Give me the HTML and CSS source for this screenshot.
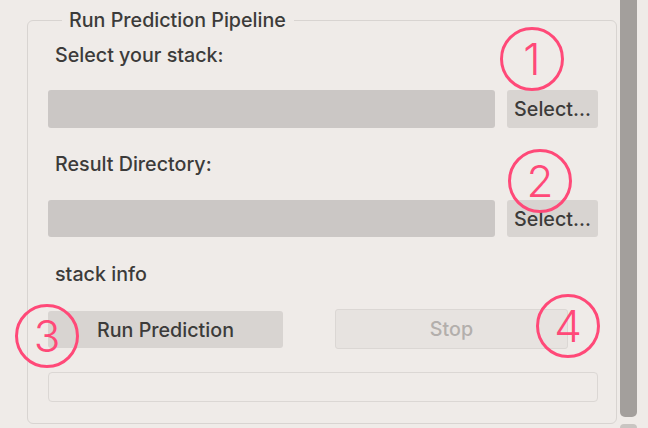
FILE: index.html
```html
<!DOCTYPE html>
<html>
<head>
<meta charset="utf-8">
<link rel="stylesheet" href="styles.css">
</head>
<body>
<div class="window">
  <div class="pane">
    <fieldset class="group">
      <legend class="group-title">Run Prediction Pipeline</legend>
      <div class="label label-first">Select your stack:</div>
      <div class="row row-first">
        <div class="field"></div>
        <button class="btn select">Select...</button>
      </div>
      <div class="label label-second">Result Directory:</div>
      <div class="row row-second">
        <div class="field"></div>
        <button class="btn select">Select...</button>
      </div>
      <div class="label label-info">stack info</div>
      <div class="actions">
        <button class="btn run">Run Prediction</button>
        <button class="btn stop" disabled>Stop</button>
      </div>
      <div class="progress"></div>
    </fieldset>
    <span class="badge badge-1">1</span>
    <span class="badge badge-2">2</span>
    <span class="badge badge-3">3</span>
    <span class="badge badge-4">4</span>
  </div>
  <div class="scrollbar">
    <div class="thumb"></div>
    <div class="thumb-next"></div>
  </div>
</div>
</body>
</html>
```

FILE: styles.css
```css
html, body {
  margin: 0;
  padding: 0;
  background: #efebe8;
  width: 648px;
  height: 428px;
  overflow: hidden;
  font-family: Inter, "Liberation Sans", sans-serif;
}

.window {
  display: flex;
  height: 428px;
}

.pane {
  position: relative;
  width: 620px;
  padding: 8px 3px 0 27px;
  box-sizing: border-box;
}

.group {
  margin: 0;
  padding: 0 18px 0 20px;
  border: 1px solid #d8d4d1;
  border-radius: 6px;
  height: 416px;
  box-sizing: border-box;
}

.group-title {
  margin-left: 14px;
  padding: 0 8px 0 7px;
  font-size: 19.7px;
  font-weight: 500;
  color: #3c3b3a;
  line-height: 24px;
}

.label {
  font-size: 19.7px;
  font-weight: 500;
  color: #3c3b3a;
  line-height: 24px;
  padding-left: 7px;
}

.label-first { margin-top: 11px; }
.label-second { margin-top: 24px; }
.label-info { margin-top: 25px; }

.row {
  display: flex;
  gap: 12px;
  margin-top: 23px;
}

.row-first { height: 38px; }
.row-second { height: 37px; margin-top: 24px; }

.field {
  flex: 1;
  background: #cbc7c5;
  border-radius: 3px;
}

.btn {
  font-family: inherit;
  font-size: 19.7px;
  font-weight: 500;
  color: #3c3b3a;
  border: none;
  border-radius: 3px;
  background: #d8d4d1;
  padding: 0;
}

.select {
  width: 91px;
}

.actions {
  display: flex;
  justify-content: space-between;
  align-items: center;
  margin-top: 23px;
  height: 40px;
}

.run {
  width: 235px;
  height: 37px;
  padding-top: 2px;
}

.stop {
  width: 233px;
  height: 40px;
  margin-right: 30px;
  background: #e7e3e0;
  border: 1px solid #dbd7d4;
  color: #b3afac;
}

.progress {
  margin-top: 23px;
  height: 30px;
  border: 1px solid #dbd7d4;
  border-radius: 4px;
  box-sizing: border-box;
}

.badge {
  position: absolute;
  width: 64px;
  height: 64px;
  box-sizing: border-box;
  border: 3px solid #ff4978;
  border-radius: 50%;
  color: #ff4978;
  font-family: Inter, "Liberation Sans", sans-serif;
  font-weight: 300;
  font-size: 44px;
  line-height: 58px;
  text-align: center;
}

.badge-1 { left: 500px; top: 27px; }
.badge-2 { left: 508px; top: 149px; }
.badge-3 { left: 15px; top: 304px; }
.badge-4 { left: 536px; top: 294px; }

.scrollbar {
  width: 17px;
  position: relative;
}

.thumb {
  height: 417px;
  background: #a39f9c;
  border-radius: 0 0 5px 5px;
}

.thumb-next {
  margin-top: 7px;
  height: 10px;
  background: #c9c5c2;
  border-radius: 4px 4px 0 0;
}
```
